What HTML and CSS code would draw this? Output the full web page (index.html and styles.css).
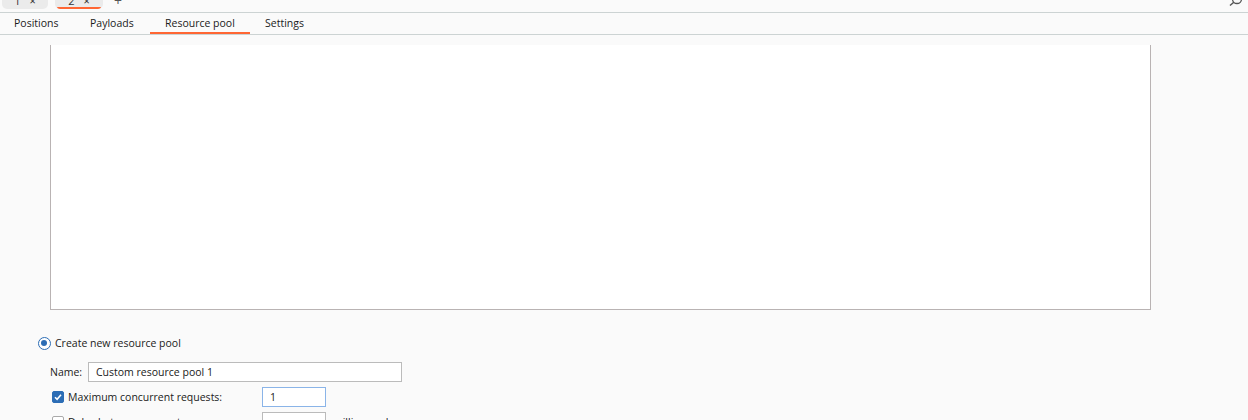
FILE: index.html
```html
<!DOCTYPE html>
<html>
<head>
<meta charset="utf-8">
<link rel="stylesheet" href="styles.css">
</head>
<body>
<div class="topstrip">
  <div class="itab"><span>1</span><span class="x">×</span></div>
  <div class="itab active"><span>2</span><span class="x">×</span></div>
  <div class="plus">+</div>
  <svg class="search" width="14" height="12" viewBox="0 0 14 12"><circle cx="9" cy="-1" r="4.5" fill="none" stroke="#555" stroke-width="1.3"/><line x1="5.8" y1="2.2" x2="2" y2="5.5" stroke="#555" stroke-width="1.5"/></svg>
</div>
<div class="tabbar">
  <div class="tab t1">Positions</div>
  <div class="tab t2">Payloads</div>
  <div class="tab t3 active">Resource pool</div>
  <div class="tab t4">Settings</div>
</div>
<div class="content">
  <div class="tablebox"></div>
  <div class="form">
    <label class="row radio-row"><span class="radio"></span>Create new resource pool</label>
    <div class="row name-row"><span class="lbl">Name:</span><div class="input name">Custom resource pool 1</div></div>
    <div class="row check-row"><span class="check on"><svg width="10" height="10" viewBox="0 0 10 10"><path d="M2 5.2 L4.1 7.3 L8 2.8" fill="none" stroke="#fff" stroke-width="1.6"/></svg></span><span class="clbl">Maximum concurrent requests:</span><div class="input small focus">1</div></div>
    <div class="row check-row"><span class="check"></span><span class="clbl">Delay between requests:</span><div class="input small"></div><span class="unit">milliseconds</span></div>
  </div>
</div>
</body>
</html>
```

FILE: styles.css
```css
* { box-sizing: border-box; }
html, body { margin: 0; padding: 0; }
body {
  width: 1248px;
  height: 420px;
  overflow: hidden;
  background: #fafafa;
  font-family: "Open Sans", "Noto Sans", sans-serif;
  font-size: 10.5px;
  color: #1a1a1a;
}
.topstrip {
  height: 13px;
  border-bottom: 1px solid #ccd3d3;
  display: flex;
  align-items: flex-start;
  padding-left: 2px;
  position: relative;
  background: #fafafa;
}
.itab {
  height: 9px;
  width: 46px;
  background: #ebebeb;
  border-radius: 0 0 5px 5px;
  display: flex;
  justify-content: center;
  align-items: flex-end;
  gap: 9px;
  font-size: 11px;
  line-height: 11px;
  color: #333;
  overflow: hidden;
  margin-right: 7px;
  position: relative;
}
.itab span { position: relative; top: -3px; }
.itab.active { width: 48px; }
.itab.active::after {
  content: "";
  position: absolute;
  left: 2px;
  right: 2px;
  bottom: 0;
  height: 2px;
  background: #ff6633;
  border-radius: 1px;
}
.plus {
  margin-left: 4px;
  margin-top: -4px;
  font-size: 14px;
  color: #555;
  line-height: 10px;
}
.search { position: absolute; right: 6px; top: 0; }
.tabbar {
  display: flex;
  height: 22px;
  border-bottom: 1px solid #ccd3d3;
}
.tab {
  padding-left: 15px;
  line-height: 20px;
  height: 21px;
  color: #1a1a1a;
  white-space: nowrap;
}
.t1 { width: 75px; padding-left: 14px; }
.t2 { width: 75px; }
.t3 { width: 100px; }
.t4 { width: 72px; }
.tab.active { border-bottom: 2px solid #ff6633; }
.content { padding-left: 50px; padding-top: 10px; }
.tablebox {
  width: 1101px;
  height: 265px;
  background: #fff;
  border: 1px solid #b9b3b3;
  border-top: none;
}
.form { margin-left: -12px; padding-top: 23px; }
.row { display: flex; align-items: center; }
.radio-row { height: 20px; gap: 4px; }
.radio {
  width: 13px;
  height: 13px;
  border-radius: 50%;
  border: 1.5px solid #2c6db5;
  background: #fff;
  position: relative;
}
.radio::after {
  content: "";
  position: absolute;
  left: 2px;
  top: 2px;
  width: 6px;
  height: 6px;
  border-radius: 50%;
  background: #2c6db5;
}
.name-row { margin-top: 9px; padding-left: 12px; height: 20px; }
.lbl { width: 38px; }
.input {
  height: 20px;
  background: #fff;
  border: 1px solid #bbb;
  line-height: 18px;
  padding-left: 7px;
}
.input.name { width: 314px; }
.check-row { padding-left: 14px; margin-top: 5px; height: 20px; }
.check {
  width: 12px;
  height: 12px;
  border-radius: 2px;
  border: 1px solid #aaa;
  background: #fff;
  display: flex;
  align-items: center;
  justify-content: center;
}
.check.on { background: #2c6db5; border-color: #2c6db5; }
.clbl { margin-left: 4px; width: 194px; }
.input.small { width: 64px; }
.input.focus { border-color: #8ab4e8; }
.unit { margin-left: 7px; }
```
